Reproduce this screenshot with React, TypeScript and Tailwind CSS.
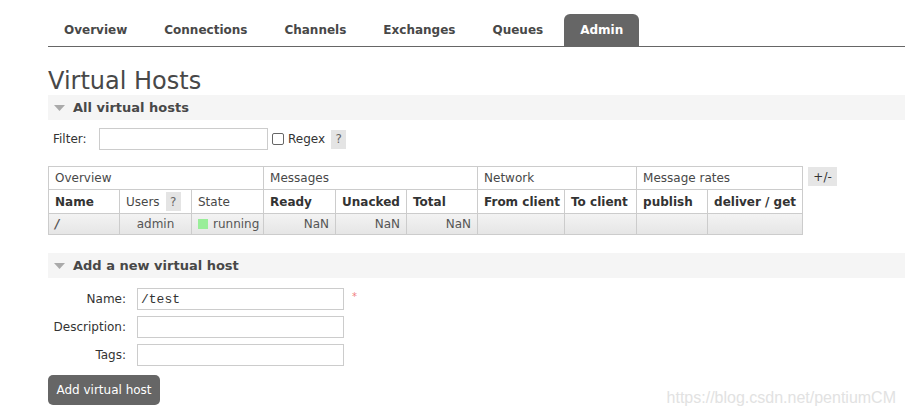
import React from "react";

const font = { fontFamily: '"DejaVu Sans", Verdana, sans-serif' };

function Tab({ label, active }: { label: string; active?: boolean }) {
  return (
    <div
      className={
        "h-[32px] px-[16px] mr-[5px] flex items-center text-[12px] font-bold rounded-t-[6px] " +
        (active ? "bg-[#666] text-white" : "text-[#484848]")
      }
    >
      {label}
    </div>
  );
}

function SectionHeader({ title }: { title: string }) {
  return (
    <div className="h-[25px] bg-[#f5f5f5] flex items-center pl-[6px]">
      <svg width="11" height="6" viewBox="0 0 11 6" className="mr-[8px]">
        <polygon points="0,0 11,0 5.5,6" fill="#aaa" />
      </svg>
      <span className="text-[13px] font-bold text-[#484848]">{title}</span>
    </div>
  );
}

function Help() {
  return (
    <span className="inline-flex items-center justify-center w-[15px] h-[19px] bg-[#e4e4e4] text-[#666] text-[12px] ml-[6px]">
      ?
    </span>
  );
}

export default function App() {
  const cols = [71, 72, 72, 72, 71, 71, 87, 72, 71, 95];
  const th = "border border-[#ccc] text-left pl-[6px] font-normal";
  const sub = "border border-[#ccc] text-left pl-[6px] font-bold text-[#333] whitespace-nowrap";
  const td = "border border-[#ccc] px-[6px] text-[#555]";
  return (
    <div className="relative min-h-[416px] bg-white pl-[48px] text-[#484848]" style={font}>
      <div className="pt-[14px] flex border-b border-[#666]">
        <Tab label="Overview" />
        <Tab label="Connections" />
        <Tab label="Channels" />
        <Tab label="Exchanges" />
        <Tab label="Queues" />
        <Tab label="Admin" active />
      </div>

      <h1 className="mt-[20px] text-[24px] leading-[28px] font-normal text-[#484848]">Virtual Hosts</h1>

      <SectionHeader title="All virtual hosts" />

      <div className="mt-[8px] flex items-center text-[12px] text-[#333]">
        <span className="ml-[5px] w-[46px]">Filter:</span>
        <input className="w-[169px] h-[22px] border border-[#ccc] outline-none" />
        <span className="ml-[4px] w-[12px] h-[12px] border border-[#666] rounded-[2px] bg-white" />
        <span className="ml-[4px]">Regex</span>
        <Help />
      </div>

      <div className="mt-[16px] flex items-start">
        <table className="table-fixed border-collapse text-[12px] text-[#484848]" style={{ width: 755 }}>
          <colgroup>
            {cols.map((w, i) => (
              <col key={i} style={{ width: w }} />
            ))}
          </colgroup>
          <tbody>
            <tr className="h-[23px]">
              <th className={th} colSpan={3}>Overview</th>
              <th className={th} colSpan={3}>Messages</th>
              <th className={th} colSpan={2}>Network</th>
              <th className={th} colSpan={2}>Message rates</th>
            </tr>
            <tr className="h-[24px]">
              <th className={sub}>Name</th>
              <th className={th + " whitespace-nowrap"}>
                <span className="inline-flex items-center">
                  Users
                  <Help />
                </span>
              </th>
              <th className={th}>State</th>
              <th className={sub}>Ready</th>
              <th className={sub}>Unacked</th>
              <th className={sub}>Total</th>
              <th className={sub}>From client</th>
              <th className={sub}>To client</th>
              <th className={sub}>publish</th>
              <th className={sub}>deliver / get</th>
            </tr>
            <tr className="h-[21px] bg-gradient-to-b from-[#f3f3f3] to-[#e5e5e5]">
              <td className={td + " font-bold italic text-[#333]"}>/</td>
              <td className={td + " text-center"}>admin</td>
              <td className={td + " whitespace-nowrap"}>
                <span className="inline-flex items-center">
                  <span className="w-[10px] h-[10px] bg-[#99ee99] mr-[5px]" />
                  running
                </span>
              </td>
              <td className={td + " text-right"}>NaN</td>
              <td className={td + " text-right"}>NaN</td>
              <td className={td + " text-right"}>NaN</td>
              <td className={td}></td>
              <td className={td}></td>
              <td className={td}></td>
              <td className={td}></td>
            </tr>
          </tbody>
        </table>
        <span className="ml-[5px] mt-[1px] w-[29px] h-[19px] bg-[#e6e6e6] flex items-center justify-center text-[12px] text-[#333]">
          +/-
        </span>
      </div>

      <div className="mt-[18px]">
        <SectionHeader title="Add a new virtual host" />
      </div>

      <div className="mt-[10px] flex flex-col gap-[6px] text-[12px] text-[#333]">
        {[
          ["Name:", "/test", true],
          ["Description:", "", false],
          ["Tags:", "", false],
        ].map(([label, val, req]) => (
          <div key={label as string} className="flex items-center">
            <span className="w-[78px] text-right">{label as string}</span>
            <input
              readOnly
              value={val as string}
              className="ml-[11px] w-[207px] h-[22px] border border-[#ccc] pl-[3px] text-[13px] text-[#333] outline-none"
              style={{ fontFamily: '"Liberation Mono", monospace' }}
            />
            {req ? <span className="ml-[8px] -mt-[6px] text-[#f08080] text-[10px]">*</span> : null}
          </div>
        ))}
      </div>

      <button className="mt-[9px] w-[112px] h-[30px] rounded-[5px] bg-[#666] text-white text-[12px]" style={font}>
        Add virtual host
      </button>

      <div
        className="absolute right-[9px] top-[386px] text-[16px] text-[#e2e2e2]"
        style={{ fontFamily: '"Liberation Sans", Arial, sans-serif' }}
      >
        https://blog.csdn.net/pentiumCM
      </div>
    </div>
  );
}
